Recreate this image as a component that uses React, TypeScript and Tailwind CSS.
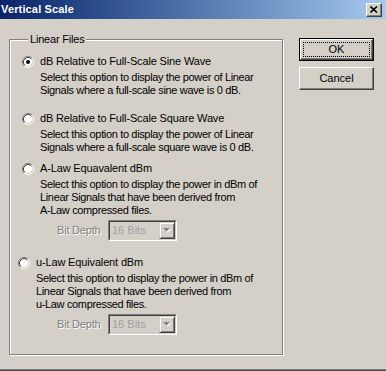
import React from 'react'

// Win2000 "Vertical Scale" dialog

function Radio({ checked }: { checked?: boolean }) {
    return (
        <svg width="12" height="12" viewBox="0 0 12 12" className="shrink-0">
            <circle cx="6" cy="6" r="4.5" fill="#fff" />
            <path d="M2.11 9.89 A5.5 5.5 0 0 1 9.89 2.11" fill="none" stroke="#808080" strokeWidth="1" />
            <path d="M9.89 2.11 A5.5 5.5 0 0 1 2.11 9.89" fill="none" stroke="#fff" strokeWidth="1" />
            <path d="M2.82 9.18 A4.5 4.5 0 0 1 9.18 2.82" fill="none" stroke="#404040" strokeWidth="1" />
            <path d="M9.18 2.82 A4.5 4.5 0 0 1 2.82 9.18" fill="none" stroke="#d4d0c8" strokeWidth="1" />
            {checked && <circle cx="6" cy="6" r="2" fill="#000" />}
        </svg>
    )
}

function BitDepth({ className }: { className?: string }) {
    return (
        <div className={`flex items-center h-[21px] ${className ?? ''}`}>
            <span className="text-[#808080] [text-shadow:1px_1px_0_#fff] w-[51px] tracking-[-0.2px]">Bit Depth</span>
            <div className="w-[69px] h-[21px] border border-t-[#808080] border-l-[#808080] border-b-white border-r-white">
                <div className="h-full flex border border-t-[#404040] border-l-[#404040] border-b-[#d4d0c8] border-r-[#d4d0c8] bg-[#d4d0c8]">
                    <span className="flex-1 pl-[2px] text-[#a0a0a0] leading-[17px]">16 Bits</span>
                    <div className="w-[16px] h-[17px] flex items-center justify-center border border-t-[#d4d0c8] border-l-[#d4d0c8] border-b-[#404040] border-r-[#404040] shadow-[inset_1px_1px_0_#fff,inset_-1px_-1px_0_#808080]">
                        <svg width="8" height="5" viewBox="0 0 8 5">
                            <path d="M1 1h7L4.5 4.5z" fill="#fff" />
                            <path d="M0 0h7L3.5 3.5z" fill="#808080" />
                        </svg>
                    </div>
                </div>
            </div>
        </div>
    )
}

interface OptionProps {
    label: string
    lines: string[]
    checked?: boolean
    bitDepth?: boolean
    className?: string
    bitClass?: string
}

function Option({ label, lines, checked, bitDepth, className, bitClass }: OptionProps) {
    return (
        <div className={className}>
            <div className="flex items-center gap-[6px] h-[13px]">
                <Radio checked={checked} />
                <span className="tracking-[-0.15px]">{label}</span>
            </div>
            <div className="pl-[18px] mt-[3px] tracking-[-0.35px]">
                {lines.map((l) => (
                    <div key={l} className="h-[13px] whitespace-nowrap">{l}</div>
                ))}
            </div>
            {bitDepth && <BitDepth className={`mt-[3px] ${bitClass ?? ''}`} />}
        </div>
    )
}

export default function App() {
    return (
        <div className="w-[386px] h-[371px] bg-[#d4d0c8] flex flex-col font-['Liberation_Sans',Arial,sans-serif] text-[11px] leading-[13px] text-black overflow-hidden">
            <div className="h-[19px] flex items-center justify-between pr-[4px] bg-gradient-to-r from-[#0a246a] to-[#a6caf0]">
                <span className="text-white font-bold leading-[19px] pl-[1px] tracking-[0.15px]">Vertical Scale</span>
                <div className="w-[16px] h-[14px] flex items-center justify-center bg-[#d4d0c8] border border-t-white border-l-white border-b-[#404040] border-r-[#404040] shadow-[inset_-1px_-1px_0_#808080]">
                    <svg width="8" height="7" viewBox="0 0 8 7">
                        <path d="M0.5 0.5 L7 6.5 M7 0.5 L0.5 6.5" stroke="#000" strokeWidth="1.6" />
                    </svg>
                </div>
            </div>

            <div className="flex-1 flex pl-[9px] pt-[14px]">
                <fieldset className="w-[274px] h-[322px] border border-[#808080] shadow-[inset_1px_1px_0_#fff,1px_1px_0_#fff] pl-[12px]">
                    <legend className="ml-[6px] px-[2px] bg-[#d4d0c8] leading-[13px] tracking-[-0.2px]">Linear Files</legend>
                    <Option
                        className="mt-[9px]"
                        checked
                        label="dB Relative to Full-Scale Sine Wave"
                        lines={['Select this option to display the power of Linear', 'Signals where a full-scale sine wave is 0 dB.']}
                    />
                    <Option
                        className="mt-[15px]"
                        label="dB Relative to Full-Scale Square Wave"
                        lines={['Select this option to display the power of Linear', 'Signals where a full-scale square wave is 0 dB.']}
                    />
                    <Option
                        className="mt-[8px]"
                        label="A-Law Equavalent dBm"
                        lines={['Select this option to display the power in dBm of', 'Linear Signals that have been derived from', 'A-Law compressed files.']}
                        bitDepth
                        bitClass="ml-[35px]"
                    />
                    <Option
                        className="mt-[15px] -ml-[4px]"
                        label="u-Law Equivalent dBm"
                        lines={['Select this option to display the power in dBm of', 'Linear Signals that have been derived from', 'u-Law compressed files.']}
                        bitDepth
                        bitClass="ml-[39px]"
                    />
                </fieldset>

                <div className="ml-[16px] mt-[5px] flex flex-col gap-[6px]">
                    <div className="w-[75px] h-[23px] border border-black">
                        <div className="h-full border border-t-white border-l-white border-b-[#404040] border-r-[#404040] shadow-[inset_-1px_-1px_0_#808080] p-[2px]">
                            <div className="h-full border border-dotted border-black flex items-center justify-center">OK</div>
                        </div>
                    </div>
                    <div className="w-[75px] h-[23px] flex items-center justify-center border border-t-white border-l-white border-b-[#404040] border-r-[#404040] shadow-[inset_-1px_-1px_0_#808080]">
                        Cancel
                    </div>
                </div>
            </div>

            <div className="h-px bg-[#808080]" />
            <div className="h-px bg-[#404040]" />
        </div>
    )
}
